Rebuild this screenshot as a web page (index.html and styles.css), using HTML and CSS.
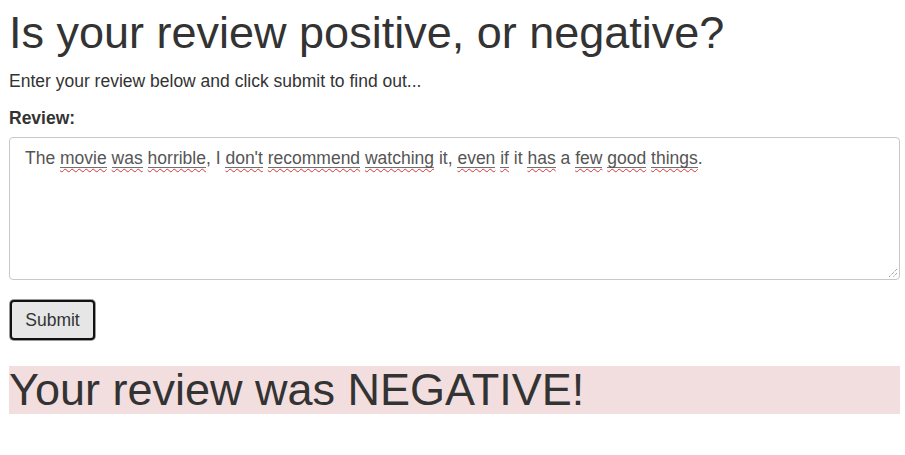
FILE: index.html
```html
<!DOCTYPE html>
<html>
<head>
<meta charset="utf-8">
<link rel="stylesheet" href="styles.css">
</head>
<body>
<main class="page">
  <h1 class="title">Is your review positive, or negative?</h1>
  <p class="intro">Enter your review below and click submit to find out...</p>
  <form class="form">
    <label class="label" id="review-label">Review:</label>
    <div class="review" role="textbox" aria-multiline="true" aria-labelledby="review-label" contenteditable="true" spellcheck="false">The <span class="sp">movie</span> <span class="sp">was</span> <span class="sp">horrible</span>, I <span class="sp">don't</span> <span class="sp">recommend</span> <span class="sp">watching</span> it, <span class="sp">even</span> <span class="sp">if</span> it <span class="sp">has</span> a <span class="sp">few</span> <span class="sp">good</span> <span class="sp">things</span>.<svg class="grip" width="10" height="10" viewBox="0 0 10 10" aria-hidden="true"><path d="M9 1L1 9M9 5L5 9" stroke="#777" stroke-width="1" stroke-dasharray="1 1" fill="none"/></svg></div>
    <div class="actions"><button type="button" class="submit">Submit</button></div>
  </form>
  <div class="result">Your review was NEGATIVE!</div>
</main>
</body>
</html>
```
FILE: styles.css
```css
* { box-sizing: border-box; }
html, body { margin: 0; background: #fff; }
body { font-family: "Liberation Sans", Arial, sans-serif; color: #333; font-size: 17.5px; }
.page { padding: 0 5px 0 9px; display: flex; flex-direction: column; }
.title { font-size: 45px; font-weight: 400; margin: 8px 0 0; line-height: 50px; }
.intro { margin: 11px 0 0; line-height: 24px; }
.form { display: flex; flex-direction: column; }
.label { font-weight: 700; margin-top: 13px; line-height: 24px; }
.review {
  position: relative;
  margin-top: 7px; height: 143px; width: 100%;
  border: 1px solid #c8c8c8; border-radius: 4px;
  padding: 8px 15px; line-height: 24px; color: #555;
  outline: none;
}
.sp {
  text-decoration: underline wavy #d8343a;
  text-decoration-thickness: 1px;
  text-underline-offset: 4px;
  background: linear-gradient(#707070, #707070) no-repeat 0 100% / 100% 1px;
}
.grip { position: absolute; right: 1px; bottom: 1px; }
.actions { margin-top: 19px; }
.submit {
  font: inherit; color: #333;
  background: #e6e6e6; border: 2px solid #111; border-radius: 4px;
  box-shadow: 0 0 0 1px #999;
  width: 85px; height: 40px; padding: 0; margin-left: 1px; margin-top: 1px;
}
.result {
  margin-top: 26px; background: #f2dede; font-size: 45px; line-height: 48px;
  height: 48px;
}
```
